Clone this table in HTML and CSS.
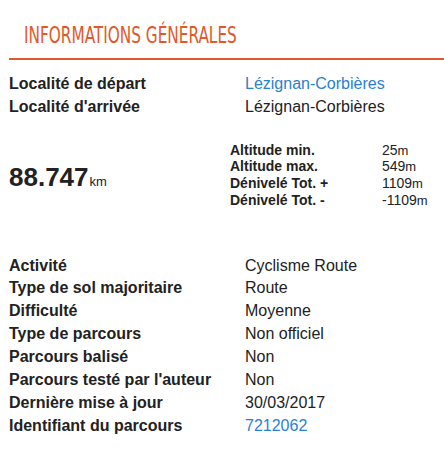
FILE: index.html
```html
<!DOCTYPE html>
<html lang="fr">
<head>
<meta charset="utf-8">
<title>Informations générales</title>
<link rel="stylesheet" href="styles.css">
</head>
<body>
<section class="panel">
  <h2 class="title"><span class="title-text">INFORMATIONS GÉNÉRALES</span></h2>
  <div class="info">
    <div class="label">Localité de départ</div>
    <div class="value"><a class="link" href="#">Lézignan-Corbières</a></div>
    <div class="label">Localité d'arrivée</div>
    <div class="value">Lézignan-Corbières</div>
  </div>
  <div class="summary">
    <div class="distance"><span class="dist-num">88.747</span><span class="dist-unit">km</span></div>
    <div class="stats">
      <div class="s-label">Altitude min.</div><div class="s-value">25<span class="unit">m</span></div>
      <div class="s-label">Altitude max.</div><div class="s-value">549<span class="unit">m</span></div>
      <div class="s-label">Dénivelé Tot. +</div><div class="s-value">1109<span class="unit">m</span></div>
      <div class="s-label">Dénivelé Tot. -</div><div class="s-value">-1109<span class="unit">m</span></div>
    </div>
  </div>
  <div class="info details">
    <div class="label">Activité</div><div class="value">Cyclisme Route</div>
    <div class="label">Type de sol majoritaire</div><div class="value">Route</div>
    <div class="label">Difficulté</div><div class="value">Moyenne</div>
    <div class="label">Type de parcours</div><div class="value">Non officiel</div>
    <div class="label">Parcours balisé</div><div class="value">Non</div>
    <div class="label">Parcours testé par l'auteur</div><div class="value">Non</div>
    <div class="label">Dernière mise à jour</div><div class="value">30/03/2017</div>
    <div class="label">Identifiant du parcours</div><div class="value"><a class="link" href="#">7212062</a></div>
  </div>
</section>
</body>
</html>
```
FILE: styles.css
```css
html, body {
  margin: 0;
  padding: 0;
  background: #fff;
}
body {
  font-family: "Liberation Sans", Arial, sans-serif;
  font-size: 16px;
  line-height: 22.857px;
  color: #222;
}
.panel {
  padding-left: 9px;
}
.title {
  margin: 23px 0 0 0;
  padding: 0 0 11px 15px;
  border-bottom: 2px solid #e0592a;
  font-family: "DejaVu Sans Condensed", "DejaVu Sans", sans-serif;
  font-stretch: condensed;
  font-weight: normal;
  font-size: 23px;
  line-height: 24px;
  color: #e0592a;
}
.title-text {
  display: inline-block;
  transform: scaleX(0.74);
  transform-origin: 0 50%;
  white-space: nowrap;
}
.info {
  display: grid;
  grid-template-columns: 236px 1fr;
  margin-top: 13px;
}
.label {
  font-weight: bold;
}
.link {
  color: #2a80d2;
  text-decoration: none;
}
.summary {
  display: flex;
  align-items: center;
  margin-top: 23px;
}
.distance {
  width: 221px;
  flex: none;
  color: #222;
  padding-top: 3px;
}
.dist-num {
  font-size: 26px;
  font-weight: bold;
  line-height: 32px;
}
.dist-unit {
  font-size: 13px;
  line-height: 0;
  margin-left: 1px;
}
.stats {
  display: grid;
  grid-template-columns: 152px auto;
  font-size: 14px;
  line-height: 16.7px;
}
.s-label {
  font-weight: bold;
}
.s-value .unit {
  font-size: 13px;
  line-height: 0;
}
.details {
  margin-top: 46px;
}
```
